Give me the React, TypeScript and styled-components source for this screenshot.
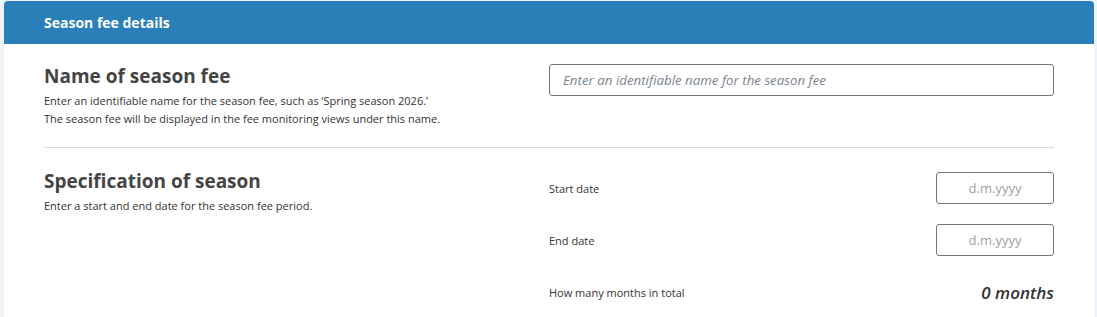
import * as React from 'react'
import styled, { createGlobalStyle } from 'styled-components'

const GlobalStyle = createGlobalStyle`
  body {
    margin: 0;
    background: #edf5fb;
    font-family: 'Open Sans', 'Liberation Sans', sans-serif;
  }
`

const Card = styled.div`
  margin: 1px 3px 0 4px;
  background: #fff;
  border-radius: 4px 4px 0 0;
  min-height: 316px;
`

const Header = styled.div`
  height: 43px;
  display: flex;
  align-items: center;
  padding: 0 40px;
  background: #2a7fb8;
  border-radius: 4px 4px 0 0;
  color: #fff;
  font-size: 14px;
  font-weight: 700;
`

const Body = styled.div`
  padding: 0 40px;
`

const Section = styled.div<{ $divider?: boolean; $top: number }>`
  display: grid;
  grid-template-columns: 1fr 1fr;
  padding: ${p => p.$top}px 0 19px;
  border-bottom: ${p => (p.$divider ? '1px solid #cfdde6' : 'none')};
`

const Title = styled.h2`
  margin: 0 0 4px;
  font-size: 19px;
  line-height: 24px;
  font-weight: 700;
  color: #444;
`

const Desc = styled.p`
  margin: 0;
  font-size: 11px;
  line-height: 18px;
  color: #333;
`

const TextInput = styled.input`
  box-sizing: border-box;
  width: 100%;
  height: 32px;
  padding: 0 13px;
  border: 1px solid #777;
  border-radius: 3px;
  font-family: inherit;
  font-size: 13.3px;
  outline: none;
  &::placeholder {
    color: #7a8590;
    font-style: italic;
  }
`

const Rows = styled.div`
  display: flex;
  flex-direction: column;
  gap: 20px;
  padding-top: 3px;
`

const Row = styled.div`
  display: flex;
  align-items: center;
  justify-content: space-between;
  height: 32px;
  font-size: 11px;
  color: #333;
`

const DateInput = styled.input`
  box-sizing: border-box;
  width: 118px;
  height: 32px;
  border: 1px solid #777;
  border-radius: 3px;
  font-family: inherit;
  font-size: 13px;
  text-align: center;
  outline: none;
  &::placeholder {
    color: #a0a0a0;
  }
`

const Total = styled.span`
  font-size: 17px;
  font-weight: 600;
  font-style: italic;
  color: #333;
`

export default function App() {
  return (
    <>
      <GlobalStyle />
      <Card>
        <Header>Season fee details</Header>
        <Body>
          <Section $divider $top={20}>
            <div>
              <Title>Name of season fee</Title>
              <Desc>
                Enter an identifiable name for the season fee, such as ‘Spring season 2026.’
                <br />
                The season fee will be displayed in the fee monitoring views under this name.
              </Desc>
            </div>
            <div>
              <TextInput placeholder="Enter an identifiable name for the season fee" />
            </div>
          </Section>
          <Section $top={21}>
            <div>
              <Title>Specification of season</Title>
              <Desc>Enter a start and end date for the season fee period.</Desc>
            </div>
            <Rows>
              <Row>
                Start date
                <DateInput placeholder="d.m.yyyy" />
              </Row>
              <Row>
                End date
                <DateInput placeholder="d.m.yyyy" />
              </Row>
              <Row>
                How many months in total
                <Total>0 months</Total>
              </Row>
            </Rows>
          </Section>
        </Body>
      </Card>
    </>
  )
}
